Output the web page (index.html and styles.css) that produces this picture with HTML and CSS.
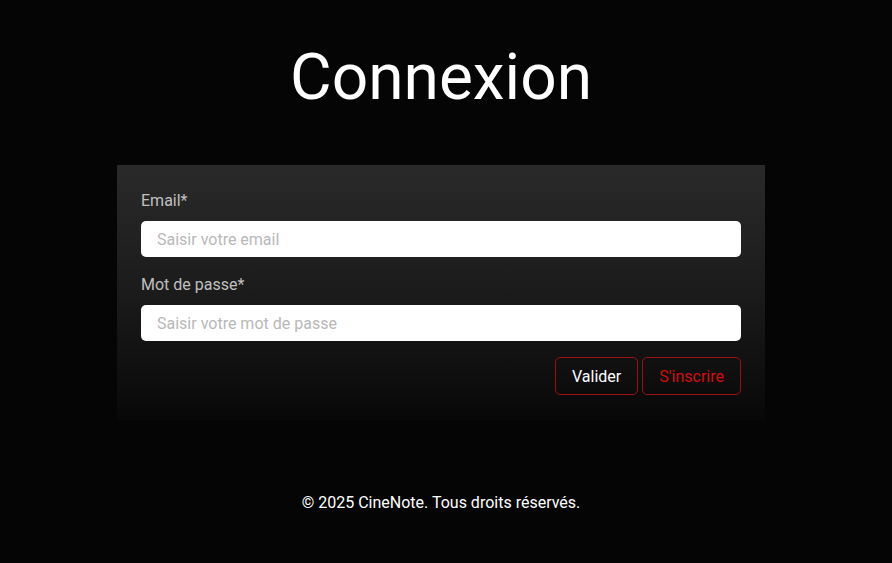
FILE: index.html
```html
<!DOCTYPE html>
<html lang="fr">
<head>
<meta charset="utf-8">
<title>Connexion - CineNote</title>
<link rel="stylesheet" href="styles.css">
</head>
<body>
<main class="page">
  <h1 class="title">Connexion</h1>
  <form class="card">
    <div class="field">
      <label class="label" for="email">Email*</label>
      <input class="input" id="email" type="email" placeholder="Saisir votre email">
    </div>
    <div class="field">
      <label class="label" for="pwd">Mot de passe*</label>
      <input class="input" id="pwd" type="password" placeholder="Saisir votre mot de passe">
    </div>
    <div class="actions">
      <button type="button" class="btn btn-primary">Valider</button>
      <button type="button" class="btn btn-secondary">S'inscrire</button>
    </div>
  </form>
</main>
<footer class="footer">© 2025 CineNote. Tous droits réservés.</footer>
</body>
</html>
```

FILE: styles.css
```css
html, body {
  margin: 0;
  padding: 0;
  background: #050505;
  font-family: Roboto, "Liberation Sans", sans-serif;
  color: #fff;
}
body {
  padding-right: 10px;
}
.page {
  display: flex;
  flex-direction: column;
  align-items: center;
  padding-top: 38px;
}
.title {
  margin: 0;
  font-size: 64px;
  font-weight: 400;
  line-height: 80px;
  color: #fff;
}
.card {
  margin-top: 47px;
  width: 648px;
  box-sizing: border-box;
  padding: 26px 24px 25px;
  background: linear-gradient(to bottom, #2a2a2a 0%, #1b1b1b 50%, #080808 100%);
  display: flex;
  flex-direction: column;
}
.field {
  display: flex;
  flex-direction: column;
  margin-bottom: 18px;
}
.field + .field {
  margin-bottom: 16px;
}
.label {
  font-size: 16px;
  line-height: 19px;
  color: #c0c0c0;
  margin-bottom: 11px;
}
.input {
  height: 36px;
  box-sizing: border-box;
  border: none;
  border-radius: 5px;
  background: #fff;
  padding: 0 16px;
  font-family: inherit;
  font-size: 16px;
  color: #222;
  outline: none;
}
.input::placeholder {
  color: #b8b8b8;
}
.actions {
  display: flex;
  justify-content: flex-end;
  gap: 4px;
}
.btn {
  height: 38px;
  box-sizing: border-box;
  background: transparent;
  border: 1px solid #a00f0f;
  border-radius: 5px;
  padding: 0 16px;
  font-family: inherit;
  font-size: 16px;
  cursor: pointer;
}
.btn-primary {
  color: #fff;
}
.btn-secondary {
  color: #d40d0d;
}
.footer {
  text-align: center;
  font-size: 16px;
  line-height: 19px;
  color: #fff;
  margin-top: 73px;
}
```
